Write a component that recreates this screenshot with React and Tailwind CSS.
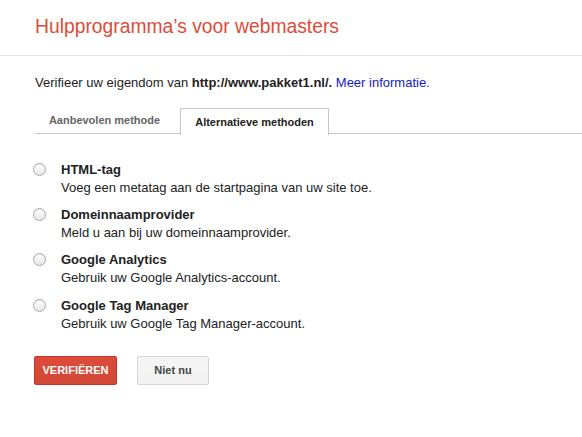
export default function App() {
  const methods = [
    { title: "HTML-tag", desc: "Voeg een metatag aan de startpagina van uw site toe." },
    { title: "Domeinnaamprovider", desc: "Meld u aan bij uw domeinnaamprovider." },
    { title: "Google Analytics", desc: "Gebruik uw Google Analytics-account." },
    { title: "Google Tag Manager", desc: "Gebruik uw Google Tag Manager-account." },
  ];

  return (
    <div className="w-[582px] h-[437px] bg-white overflow-hidden text-[13px] text-[#222] font-['Liberation_Sans',Arial,sans-serif]">
      {/* header */}
      <div className="h-[56px] border-b border-[#e5e5e5] px-[35px] pt-[15px]">
        <h1 className="text-[19.3px] leading-[24px] text-[#dd4b39]">Hulpprogramma’s voor webmasters</h1>
      </div>

      <div className="pl-[35px]">
        <p className="mt-[19px] leading-[16px]">
          Verifieer uw eigendom van <b>http://www.pakket1.nl/.</b>{" "}
          <a className="text-[#1122cc]">Meer informatie.</a>
        </p>

        {/* tabs */}
        <div className="mt-[17px] flex h-[26px] border-b border-[#c6c6c6]">
          <div className="w-[145px] pr-[6px] flex items-center justify-center text-[11px] font-bold text-[#666]">
            Aanbevolen methode
          </div>
          <div className="w-[149px] h-[27px] -mb-px flex items-center justify-center border border-b-0 border-[#c6c6c6] bg-white text-[11px] font-bold text-[#222]">
            Alternatieve methoden
          </div>
        </div>

        {/* methods */}
        <div className="mt-[28px] flex flex-col gap-[11px]">
          {methods.map((m, i) => (
            <label key={m.title} className={`flex items-start gap-[15px] ${i === 3 ? "mt-px" : ""}`}>
              <span className="mt-[1px] -ml-[2px] w-[13px] h-[13px] rounded-full border border-[#a8a8a8] bg-gradient-to-b from-white to-[#e6e6e6] shadow-[inset_0_1px_1px_rgba(0,0,0,0.08)]" />
              <span className="flex flex-col">
                <span className="font-bold leading-[16px]">{m.title}</span>
                <span className="leading-[16px] mt-[2px]">{m.desc}</span>
              </span>
            </label>
          ))}
        </div>

        {/* buttons */}
        <div className="mt-[24px] -ml-px flex gap-[20px]">
          <button className="h-[29px] w-[83px] rounded-[2px] border border-[#c6322a] bg-gradient-to-b from-[#dd4b39] to-[#d14836] text-[11px] font-bold text-white">
            VERIFIËREN
          </button>
          <button className="h-[29px] w-[72px] rounded-[2px] border border-[#d6d6d6] bg-gradient-to-b from-[#f5f5f5] to-[#f1f1f1] text-[11px] font-bold text-[#444]">
            Niet nu
          </button>
        </div>
      </div>
    </div>
  );
}
